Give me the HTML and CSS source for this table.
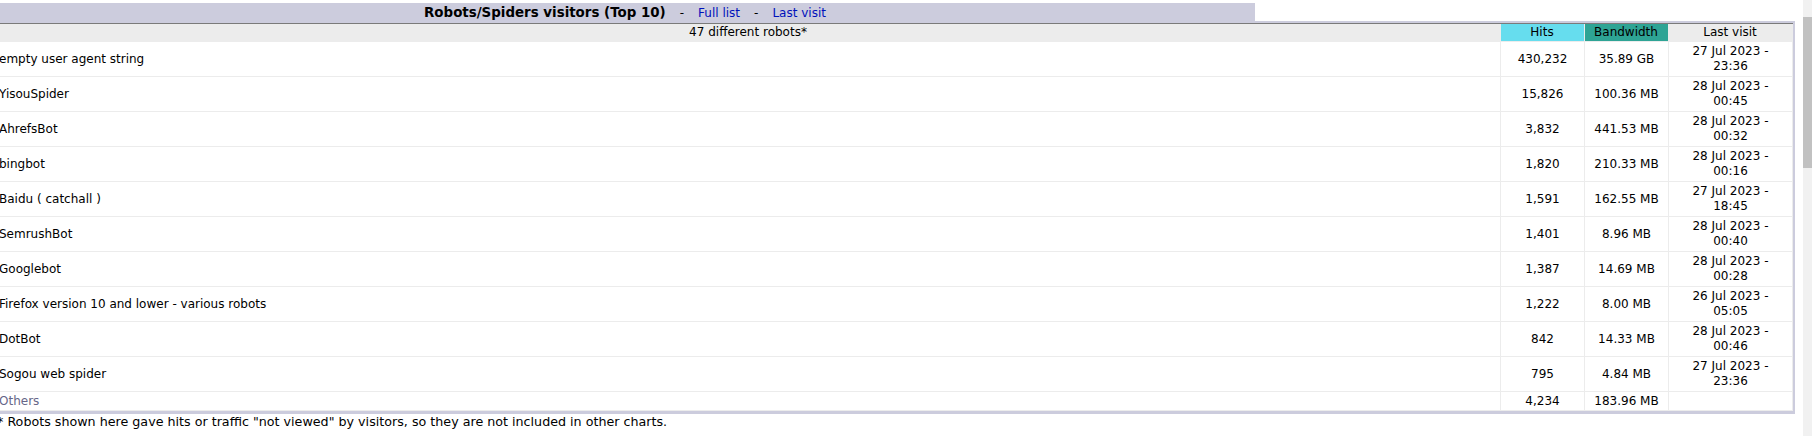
FILE: index.html
```html
<!DOCTYPE html>
<html lang="en">
<head>
<meta charset="UTF-8">
<title>Robots/Spiders visitors</title>
<link rel="stylesheet" href="styles.css">
</head>
<body>
<div id="page">
	<div id="content">
		<div class="title-row">
			<div class="aws_title">Robots/Spiders visitors (Top 10) &nbsp; <span class="sep">-</span> &nbsp; <a href="#">Full list</a> &nbsp; <span class="sep">-</span> &nbsp; <a href="#">Last visit</a></div>
			<div class="aws_blank"></div>
		</div>
		<div class="aws_border">
			<table class="aws_data">
				<tr class="head">
					<th class="c-name">47 different robots*</th>
					<th class="c-hits">Hits</th>
					<th class="c-bw">Bandwidth</th>
					<th class="c-last">Last visit</th>
				</tr>
				<tr><td class="aws">empty user agent string</td><td>430,232</td><td>35.89 GB</td><td>27 Jul 2023 -<br>23:36</td></tr>
				<tr><td class="aws">YisouSpider</td><td>15,826</td><td>100.36 MB</td><td>28 Jul 2023 -<br>00:45</td></tr>
				<tr><td class="aws">AhrefsBot</td><td>3,832</td><td>441.53 MB</td><td>28 Jul 2023 -<br>00:32</td></tr>
				<tr><td class="aws">bingbot</td><td>1,820</td><td>210.33 MB</td><td>28 Jul 2023 -<br>00:16</td></tr>
				<tr><td class="aws">Baidu ( catchall )</td><td>1,591</td><td>162.55 MB</td><td>27 Jul 2023 -<br>18:45</td></tr>
				<tr><td class="aws">SemrushBot</td><td>1,401</td><td>8.96 MB</td><td>28 Jul 2023 -<br>00:40</td></tr>
				<tr><td class="aws">Googlebot</td><td>1,387</td><td>14.69 MB</td><td>28 Jul 2023 -<br>00:28</td></tr>
				<tr><td class="aws">Firefox version 10 and lower - various robots</td><td>1,222</td><td>8.00 MB</td><td>26 Jul 2023 -<br>05:05</td></tr>
				<tr><td class="aws">DotBot</td><td>842</td><td>14.33 MB</td><td>28 Jul 2023 -<br>00:46</td></tr>
				<tr><td class="aws">Sogou web spider</td><td>795</td><td>4.84 MB</td><td>27 Jul 2023 -<br>23:36</td></tr>
				<tr class="others"><td class="aws"><span class="other-label">Others</span></td><td>4,234</td><td>183.96 MB</td><td>&nbsp;</td></tr>
			</table>
		</div>
		<p class="note">* Robots shown here gave hits or traffic "not viewed" by visitors, so they are not included in other charts.</p>
	</div>
	<div id="scrollbar"><div class="thumb"></div></div>
</div>
</body>
</html>
```

FILE: styles.css
```css
*{ margin:0; padding:0;}
body{
	background:#fff;
	font:12px "DejaVu Sans", Verdana, sans-serif;
	color:#000;
	overflow:hidden;
}
#page{
	display:flex;
	height:436px;
}
#content{
	width:1800px;
	margin-left:-5px;
	padding-top:3px;
}
#scrollbar{
	width:9px;
	margin-left:8px;
	background:#f1f1f1;
	padding-top:17px;
}
#scrollbar .thumb{
	height:151px;
	background:#c1c1c1;
}
.title-row{
	display:flex;
	height:18px;
}
.aws_title{
	width:70%;
	background-color:#CCCCDD;
	font-weight:bold;
	font-size:13.4px;
	line-height:17px;
	padding-top:1px;
	text-align:center;
	white-space:nowrap;
}
.aws_title a{
	font-weight:normal;
	font-size:12px;
	color:#0011BB;
	text-decoration:none;
}
.aws_title .sep{
	font-weight:normal;
	font-size:12px;
}
.aws_blank{
	flex:1;
	background:#fff;
}
.aws_border{
	background-color:#CCCCDD;
	padding:2px 2px 3px 2px;
}
.aws_data{
	width:100%;
	table-layout:fixed;
	border-collapse:separate;
	border-spacing:0;
	background:#fff;
	border-top:1px solid #7a7a7a;
}
.aws_data th,
.aws_data td{
	box-sizing:border-box;
	border-right:1px solid #ECECEC;
	border-bottom:1px solid #ECECEC;
	font-weight:normal;
	line-height:15px;
	text-align:center;
	vertical-align:middle;
}
.aws_data th{
	padding:1px 2px 1px 1px;
	height:18px;
}
.aws_data td{
	padding:2px;
	height:35px;
}
.aws_data td.aws{
	text-align:left;
}
.head{
	background-color:#ECECEC;
}
.c-hits{
	width:84px;
	background-color:#66DDEE;
}
.c-bw{
	width:84px;
	background-color:#2EA495;
}
.c-last{
	width:124px;
}
.others td{
	height:19px;
	padding:1px 2px;
}
.other-label{
	color:#666688;
}
.note{
	padding-left:2px;
	font-size:12.7px;
	line-height:16px;
	white-space:nowrap;
}
```
